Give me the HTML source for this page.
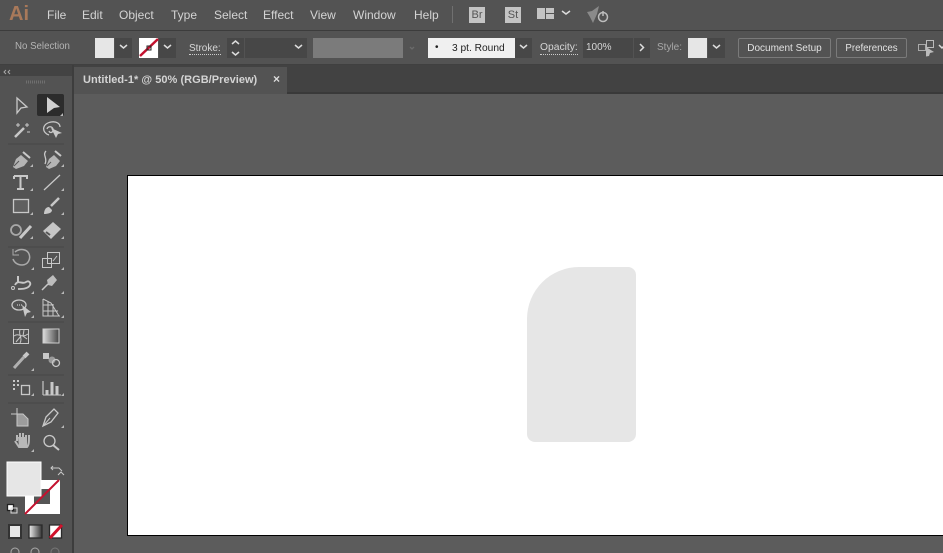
<!DOCTYPE html>
<html><head><meta charset="utf-8"><style>
html,body{margin:0;padding:0;width:943px;height:553px;overflow:hidden;background:#5a5a5a;font-family:"Liberation Sans",sans-serif}
.a{position:absolute}
.t{position:absolute;white-space:nowrap;color:#d4d4d4;font-size:12px;line-height:14px}
.c{position:absolute;white-space:nowrap;color:#d6d6d6;font-size:10px;line-height:12px}
.dd{position:absolute;background:#474747;height:20px;top:38px}
svg{position:absolute;left:0;top:0}
</style></head><body>
<div class="a" style="left:0;top:0;width:943px;height:30px;background:#535353"></div>
<div class="a" style="left:0;top:30px;width:943px;height:1px;background:#3c3c3c"></div>
<div class="a" style="left:0;top:31px;width:943px;height:33px;background:#535353"></div>
<div class="a" style="left:0;top:64px;width:943px;height:1px;background:#404040"></div>
<div class="a" style="left:74px;top:65px;width:869px;height:28px;background:#424242"></div>
<div class="a" style="left:74px;top:92px;width:869px;height:2px;background:#393939"></div>
<div class="a" style="left:74px;top:94px;width:869px;height:459px;background:#5c5c5c"></div>
<div class="a" style="left:74px;top:67px;width:213px;height:27px;background:#535353"></div>
<div class="a" style="left:0;top:65px;width:72px;height:488px;background:#535353"></div>
<div class="a" style="left:0;top:65px;width:72px;height:11px;background:#434343"></div>
<div class="a" style="left:72px;top:65px;width:2px;height:488px;background:#3d3d3d"></div>
<div class="a" style="left:127px;top:175px;width:816px;height:361px;background:#fff;box-sizing:border-box;border:1px solid #000;border-right:0"></div>
<div class="a" style="left:527px;top:267px;width:109px;height:175px;background:#e6e6e6;border-radius:52px 8px 8px 8px"></div>

<div class="a" style="left:9px;top:1px;font:bold 20px/26px 'Liberation Sans',sans-serif;color:#a9795a">Ai</div>
<div class="t" style="left:47px;top:8px">File</div>
<div class="t" style="left:82px;top:8px">Edit</div>
<div class="t" style="left:119px;top:8px">Object</div>
<div class="t" style="left:171px;top:8px">Type</div>
<div class="t" style="left:214px;top:8px">Select</div>
<div class="t" style="left:263px;top:8px">Effect</div>
<div class="t" style="left:310px;top:8px">View</div>
<div class="t" style="left:353px;top:8px">Window</div>
<div class="t" style="left:414px;top:8px">Help</div>
<div class="a" style="left:452px;top:6px;width:1px;height:17px;background:#707070"></div>
<div class="a" style="left:469px;top:7px;width:16px;height:16px;background:#c4c4c4;color:#555;font:11px/16px 'Liberation Sans',sans-serif;text-align:center">Br</div>
<div class="a" style="left:505px;top:7px;width:16px;height:16px;background:#c4c4c4;color:#555;font:11px/16px 'Liberation Sans',sans-serif;text-align:center">St</div>

<div class="c" style="left:15px;top:41px;color:#b4b4b4;font-size:9.7px">No Selection</div>
<div class="a" style="left:95px;top:38px;width:19px;height:20px;background:#e6e6e6"></div>
<div class="dd" style="left:115px;width:17px"></div>
<div class="a" style="left:139px;top:38px;width:19px;height:20px;background:#fff"></div>
<div class="dd" style="left:159px;width:17px"></div>
<div class="c" style="left:189px;top:43px;border-bottom:1px dotted #ccc;line-height:11px">Stroke:</div>
<div class="dd" style="left:227px;width:17px"></div>
<div class="dd" style="left:245px;width:45px"></div>
<div class="dd" style="left:290px;width:17px"></div>
<div class="a" style="left:313px;top:38px;width:90px;height:20px;background:#7b7b7b"></div>
<div class="a" style="left:428px;top:38px;width:87px;height:20px;background:#f0f0f0"></div>
<div class="c" style="left:435px;top:42px;color:#222">•</div>
<div class="c" style="left:452px;top:43px;color:#222;font-size:10.2px">3 pt. Round</div>
<div class="dd" style="left:515px;width:17px"></div>
<div class="c" style="left:540px;top:42px;border-bottom:1px dotted #ccc;line-height:12px;font-size:10.3px">Opacity:</div>
<div class="dd" style="left:583px;width:50px"></div>
<div class="dd" style="left:634px;width:16px"></div>
<div class="c" style="left:586px;top:42px">100%</div>
<div class="c" style="left:657px;top:42px;color:#a8a8a8">Style:</div>
<div class="a" style="left:688px;top:38px;width:19px;height:20px;background:#e6e6e6"></div>
<div class="dd" style="left:708px;width:17px"></div>
<div class="a" style="left:738px;top:38px;width:91px;height:18px;border:1px solid #7a7a7a;border-radius:2px;color:#e2e2e2;font-size:10px;line-height:20px;text-align:center">Document Setup</div>
<div class="a" style="left:836px;top:38px;width:69px;height:18px;border:1px solid #7a7a7a;border-radius:2px;color:#e2e2e2;font-size:9.7px;line-height:20px;text-align:center">Preferences</div>

<div class="t" style="left:83px;top:73px;font-size:11px;font-weight:bold;color:#d4d4d4;letter-spacing:.03px">Untitled-1* @ 50% (RGB/Preview)</div>
<div class="t" style="left:273px;top:72px;font-size:12px;font-weight:bold;color:#ddd">×</div>
<div class="a" style="left:37px;top:94px;width:27px;height:22px;background:#2c2c2c;border-radius:2px"></div>

<svg width="943" height="553" fill="none" stroke="#c8c8c8" stroke-width="1.3">
<!-- chevrons -->
<g stroke="#dcdcdc" stroke-width="1.5">
<path d="M120 45l3.500 3 3.500-3M164 45l3.500 3 3.500-3M295 45l3.500 3 3.500-3M520 45l3.500 3 3.500-3M713 45l3.500 3 3.500-3M562 11l4 3 4-3M640 44l3.500 3.500-3.500 3.500M232 44l3.500-3 3.500 3M232 52l3.500 3 3.500-3M939 45l3 3 3-3"/>
</g>
<!-- stroke swatch slash -->
<path d="M140 56l18-17" stroke="#c4122f" stroke-width="2.500"/>
<rect x="147" y="46" width="4" height="4" stroke="#222" stroke-width="1"/>
<path d="M410 47l2 2 2-2" stroke="#6b6b6b"/>
<!-- workspace icon -->
<g fill="#c4c4c4" stroke="none">
<rect x="537" y="8" width="8" height="11"/><rect x="546" y="8" width="8" height="5"/><rect x="546" y="14" width="8" height="5"/>
<path d="M587 12l5-1 7-5-2 8-4 9-3-6z" fill="#8a8a8a"/>
</g>
<circle cx="603" cy="17" r="4.500" stroke="#bdbdbd" stroke-width="1.500"/><path d="M603 11v5" stroke="#bdbdbd" stroke-width="1.500"/>
<!-- align icon -->
<rect x="918.500" y="44.500" width="7" height="6" stroke="#aaa" stroke-width="1"/><rect x="926.500" y="40.500" width="7" height="7" stroke="#bbb" stroke-width="1"/><path d="M926 47l8 5-4 1-1 3-3 .5z" fill="#bbb" stroke="none"/>
<!-- grip -->
<path d="M6 70l-2 2 2 2M10 70l-2 2 2 2" stroke="#aaa" stroke-width="1"/>
<path d="M26 82h20" stroke="#6f6f6f" stroke-width="3" stroke-dasharray="1 1"/>
<!-- separators -->
<g stroke="#474747" stroke-width="1"><path d="M8 144h56M8 247h56M8 322h56M8 375h56M8 403h56"/></g>
<!-- corner marks -->
<g fill="#b8b8b8" stroke="none">
<path d="M63 113v3h-3zM33 164v3h-3zM64 164v3h-3zM33 188v3h-3zM64 188v3h-3zM33 212v3h-3zM64 212v3h-3zM33 236v3h-3zM64 236v3h-3zM34 267v3h-3zM64 267v3h-3zM34 291v3h-3zM64 291v3h-3zM34 315v3h-3zM64 315v3h-3zM34 368v3h-3zM34 393v3h-3zM64 393v3h-3zM64 425v3h-3zM34 449v3h-3z"/>
</g>
<!-- selection -->
<path d="M17 98l10 9-6 1-4 5z"/>
<path d="M47 97l13 10-6 1-7 5z" fill="#d0d0d0" stroke="none"/>
<!-- magic wand -->
<path d="M15 137l9-9" stroke-width="2.500"/><path d="M18 123v4M16 125h4M27 123v4M25 125h4M27 132h3" stroke-width="1"/>
<!-- lasso -->
<path d="M49 135c-7-2-8-11 2-13 6-1 9 2 9 5M47 129c1-3 5-3 6 0s-3 5-4 2"/><path d="M51 128l11 5-4 1-2 4z" fill="#c8c8c8" stroke="none"/>
<!-- pen -->
<path d="M13 167l3-8 5-4 7 6-4 5-8 3z" fill="#b4b4b4" stroke="none"/><path d="M23 152l7 6" stroke-width="2"/><path d="M14 166l5-5" stroke="#555" stroke-width="1"/>
<path d="M46 167l3-8 5-4 6 6-4 5-7 3z" fill="#b4b4b4" stroke="none"/><path d="M55 151l6 5" stroke-width="2"/><path d="M46 151c-4 4 2 7-1 13" /><path d="M47 166l4-4" stroke="#555" stroke-width="1"/>
<!-- type -->
<path d="M14 176h13v3M14 179v-3M20.500 176v13M17 189h7" stroke-width="2"/>
<!-- line -->
<path d="M44 190l16-15"/>
<!-- rect -->
<rect x="13.500" y="199.500" width="15" height="13" fill="#5f5f5f"/>
<!-- brush -->
<path d="M59 198l-8 8" stroke-width="2.500"/><path d="M44 214c0-4 2-7 5-7l3 3c0 3-4 4-8 4z" fill="#c8c8c8" stroke="none"/>
<!-- shaper -->
<circle cx="16" cy="230" r="5" stroke="#a8a8a8" stroke-width="1.800"/><path d="M20 238l11-12" stroke-width="3"/>
<!-- eraser -->
<path d="M43 231l10-9 8 7-10 10z" fill="#c6c6c6" stroke="none"/><path d="M46 232l4 3" stroke="#555" stroke-width="2"/>
<!-- rotate -->
<path d="M15 252c5-4 12-3 14 2s-1 11-7 11c-5 0-8-3-9-6" stroke="#aaa" stroke-width="1.500"/><path d="M13 249v6h6" stroke="#aaa" stroke-width="1"/>
<!-- scale -->
<rect x="42.500" y="258.500" width="9" height="9" stroke-width="1"/><rect x="47.500" y="252.500" width="12" height="11" stroke-width="1"/><path d="M53 261l4-5" stroke-width="1"/>
<!-- warp/width -->
<path d="M15 285c3-6 8 0 11-3 3-2 5 1 4 3-2 4-8 4-12 4" stroke-width="1.800"/><circle cx="13" cy="288" r="1.500" stroke-width="1"/><path d="M18 276v6" stroke-width="2"/>
<!-- pin -->
<path d="M42 290l6-6" stroke-width="1.500"/><path d="M47 280l6-5 4 5-5 6-4-1z" fill="#bdbdbd" stroke="none"/>
<!-- shape builder -->
<ellipse cx="19" cy="305" rx="7" ry="5"/><path d="M22 305l9 7-4 1-2 4z" fill="#c8c8c8" stroke="none"/><path d="M17 305h5" stroke-dasharray="1 1"/>
<!-- perspective -->
<path d="M43 299v17h17M43 299l8 4 8 13M43 305h10M43 311h15M48 301v15M53 304v12" stroke-width="1"/>
<!-- mesh -->
<rect x="13.500" y="329.500" width="15" height="14" stroke-width="1"/><path d="M14 336c5-4 7 3 14-2M20 330c-2 4 3 8 0 13M16 342l5-6M24 330l-1 6 4 3" stroke-width="1"/>
<!-- eyedropper -->
<path d="M14 368l10-11" stroke="#b0b0b0" stroke-width="3"/><path d="M24 357l4-4" stroke-width="4"/>
<!-- blend -->
<rect x="43" y="353" width="6" height="6" fill="#c8c8c8" stroke="none"/><circle cx="52" cy="360" r="3.500" fill="#9a9a9a" stroke="none"/><circle cx="56" cy="363" r="3.500"/>
<!-- symbol sprayer -->
<path d="M13 381h2M17 381h2M13 385h2M17 385h2M13 389h2" stroke-width="2"/><rect x="21.500" y="385.500" width="8" height="9"/>
<!-- graph -->
<path d="M43 395V381" stroke-width="1.200"/><path d="M47 395v-5M52 395v-13M57 395v-9" stroke-width="3"/><path d="M43 395h18" stroke-width="1"/>
<!-- artboard -->
<path d="M11 414h6M17 408v6" stroke-width="1"/><path d="M17 414h6l5 5v7H17z" fill="#9c9c9c" stroke-width="1"/>
<!-- slice -->
<path d="M43 426l3-9 8-8 4 4-7 9z"/><path d="M44 425l6-7" stroke-width="1"/>
<!-- hand -->
<path d="M15 441l4 6h8c2-2 2-6 2-11v-1M17 435v6M20 433v8M23 433v8M26 435v6" stroke="#b8b8b8" stroke-width="2"/><path d="M18 437h9v10h-8z" fill="#b8b8b8" stroke="none"/>
<!-- zoom -->
<circle cx="49.500" cy="441" r="5.500"/><path d="M53 445l6 5" stroke-width="2"/>
<!-- fill/stroke swatches -->
<rect x="25" y="480" width="35" height="34" fill="#fff" stroke="none"/>
<rect x="34" y="489" width="16" height="15" fill="#555" stroke="none"/>
<rect x="7" y="462" width="34" height="34" fill="#e6e6e6" stroke="#fff" stroke-width="1"/>
<path d="M25 514l34-34" stroke="#c4122f" stroke-width="2"/>
<path d="M51 468h8l3 3M64 475l-3-3-3 3M53 466l-2 2 2 2" stroke-width="1"/>
<rect x="7.500" y="504.500" width="6" height="6" fill="#fff" stroke="#222"/><rect x="11" y="508" width="6" height="5" stroke="#ddd" stroke-width="1"/>
<rect x="8" y="524" width="14" height="15" fill="#333" stroke="none"/>
<rect x="10" y="526" width="10" height="11" fill="#e6e6e6" stroke="none"/>
<defs><linearGradient id="g"><stop offset="0" stop-color="#eee"/><stop offset="1" stop-color="#333"/></linearGradient><linearGradient id="h"><stop offset="0" stop-color="#ddd"/><stop offset="1" stop-color="#444"/></linearGradient></defs>
<rect x="29" y="525" width="13" height="13" fill="url(#g)" stroke="#2a2a2a"/>
<rect x="49.500" y="525" width="12" height="13" fill="#fff" stroke="#2a2a2a"/>
<path d="M50 538l12-13" stroke="#d1112b" stroke-width="3"/>
<rect x="43" y="329" width="16" height="14" fill="url(#h)" stroke="#cfcfcf" stroke-width="1"/>
<g stroke="#aaa" stroke-width="1"><circle cx="15" cy="552" r="4"/><circle cx="35" cy="552" r="4"/><circle cx="55" cy="552" r="4" stroke="#777"/></g>
</svg>
</body></html>
